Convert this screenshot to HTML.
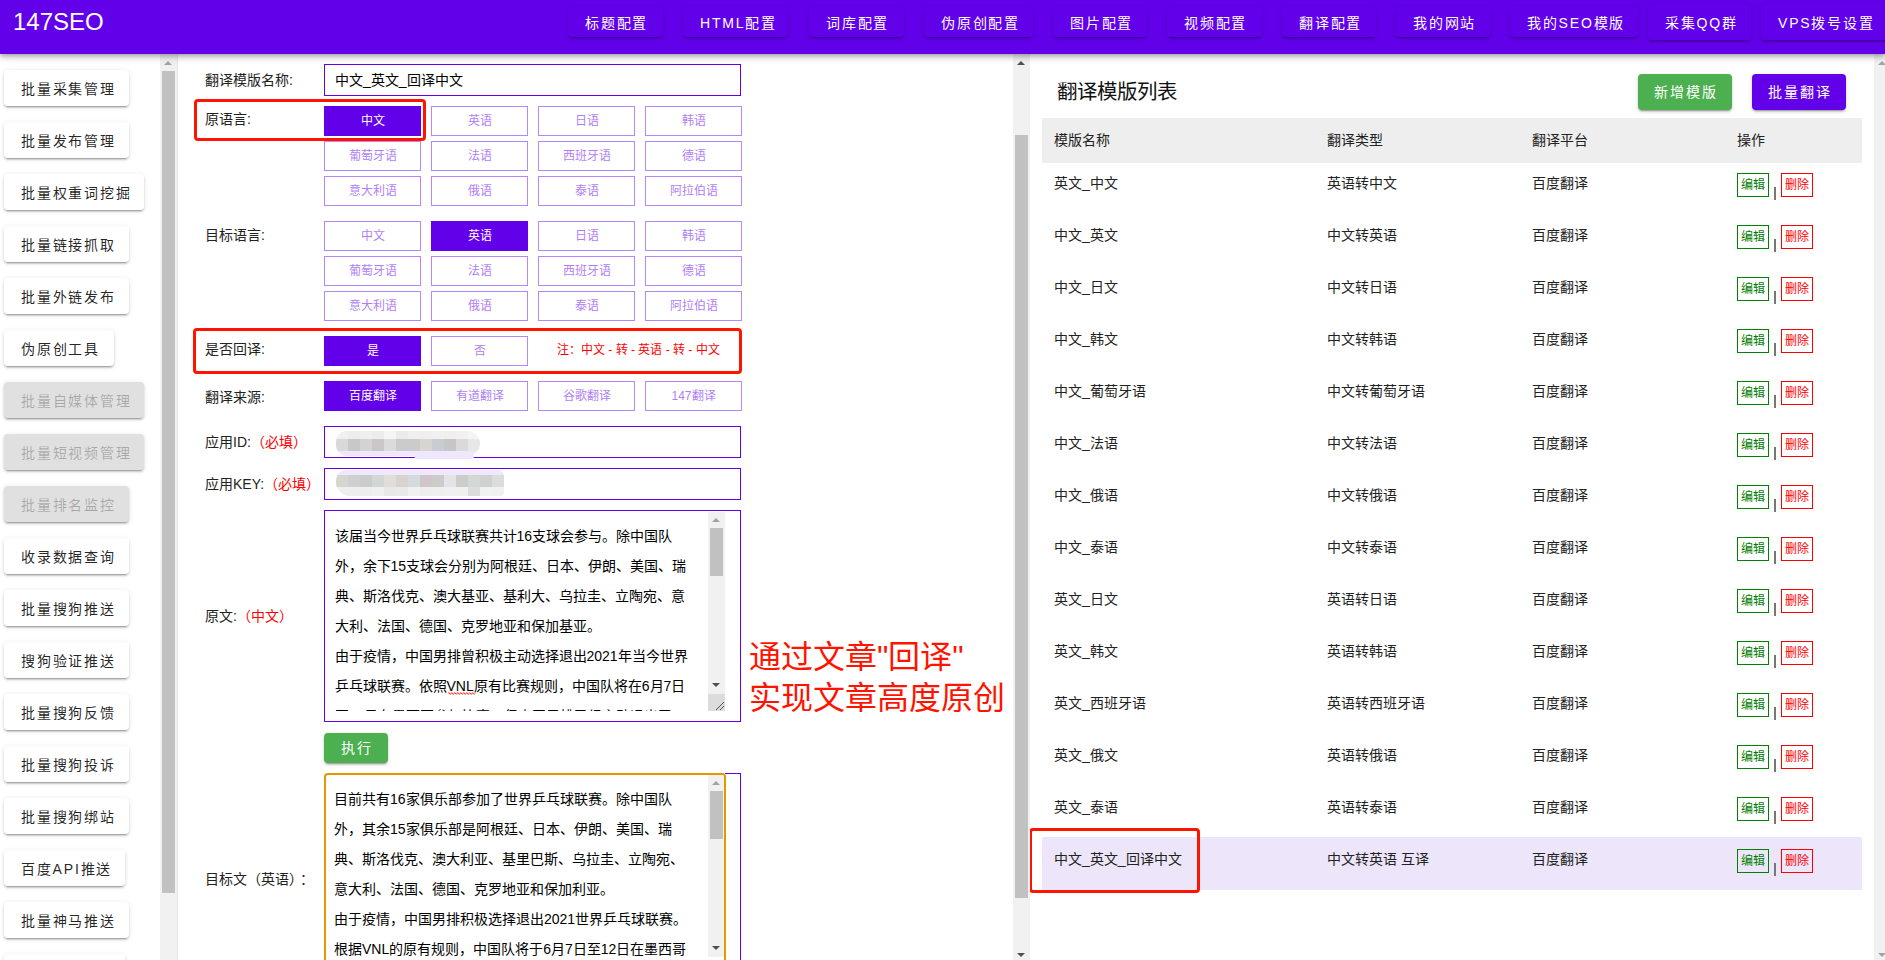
<!DOCTYPE html>
<html lang="zh-CN"><head><meta charset="utf-8">
<style>
*{box-sizing:border-box;margin:0;padding:0}
html,body{width:1885px;height:960px;overflow:hidden;background:#fff}
body{position:relative;font-family:"Liberation Sans",sans-serif;color:rgba(0,0,0,.87);font-size:14px}
.a{position:absolute}
#hdr{left:0;top:0;width:1885px;height:54px;background:#6200ea;z-index:5;box-shadow:0 2px 4px -1px rgba(0,0,0,.2),0 4px 5px 0 rgba(0,0,0,.14),0 1px 10px 0 rgba(0,0,0,.12)}
#logo{left:13px;top:8px;color:#fff;font-size:24px;line-height:28px}
.nb{font-weight:500;height:30px;top:7px;background:#6200ea;color:#fff;border-radius:4px;font-size:14px;letter-spacing:1.8px;line-height:32px;padding-left:17px;white-space:nowrap;box-shadow:0 3px 1px -2px rgba(0,0,0,.2),0 2px 2px 0 rgba(0,0,0,.14),0 1px 5px 0 rgba(0,0,0,.12)}
.nb.t{height:36px;top:4px;line-height:38px}
.sb{font-weight:500;left:4px;height:36px;background:#fff;border-radius:4px;font-size:14px;letter-spacing:1.8px;line-height:38px;padding-left:17px;white-space:nowrap;color:rgba(0,0,0,.87);box-shadow:0 3px 1px -2px rgba(0,0,0,.2),0 2px 2px 0 rgba(0,0,0,.14),0 1px 5px 0 rgba(0,0,0,.12)}
.sb.d{background:#e0e0e0;color:rgba(0,0,0,.26)}
.trk{background:#f1f1f1}
.thm{background:#c1c1c1}
.up{width:0;height:0;border-left:4px solid transparent;border-right:4px solid transparent;border-bottom:4px solid #505050}
.dn{width:0;height:0;border-left:4px solid transparent;border-right:4px solid transparent;border-top:4px solid #505050}

.lb{left:205px;font-size:14px;line-height:20px;white-space:nowrap;color:#222}
.rd{color:#ff0000}
.inp{left:324px;width:417px;height:32px;border:1px solid #6200ea;background:#fff}
.lg{width:97px;height:30px;border:1px solid #b388ff;color:#b07ff4;font-size:12px;line-height:28px;text-align:center;background:#fff;white-space:nowrap}
.lg.s{background:#6200ea;border-color:#6200ea;color:#fff}
.rbox{border:3px solid #ff1400;border-radius:4px}
.ta{left:324px;width:417px;border:1px solid #6200ea;background:#fff}
.tl{position:absolute;left:9.5px;font-size:14px;line-height:30px;white-space:nowrap;color:#000}
.gbtn{font-weight:500;padding-left:1.8px;background:#4caf50;color:#fff;border-radius:4px;font-size:14px;letter-spacing:1.8px;text-align:center;box-shadow:0 3px 1px -2px rgba(0,0,0,.2),0 2px 2px 0 rgba(0,0,0,.14),0 1px 5px 0 rgba(0,0,0,.12)}

.td{font-size:14px;line-height:20px;white-space:nowrap;color:#222;font-weight:350}
.th{font-size:14px;line-height:20px;white-space:nowrap;color:#222;font-weight:350}
.eb{width:32px;height:24px;font-size:12px;line-height:22px;text-align:center;border:1px solid #008000;color:#008000;background:transparent}
.db{width:32px;height:24px;font-size:12px;line-height:22px;text-align:center;border:1px solid #ff0000;color:#ff0000;background:transparent}
.pp{width:2px;height:13px;background:#777}
</style></head><body>
<div id="hdr" class="a">
  <div id="logo" class="a">147SEO</div>
  <div class="a nb" style="left:568px;width:95px">标题配置</div>
  <div class="a nb" style="left:683px;width:105px">HTML配置</div>
  <div class="a nb" style="left:809px;width:95px">词库配置</div>
  <div class="a nb" style="left:924px;width:109px">伪原创配置</div>
  <div class="a nb" style="left:1053px;width:94px">图片配置</div>
  <div class="a nb" style="left:1167px;width:95px">视频配置</div>
  <div class="a nb" style="left:1282px;width:94px">翻译配置</div>
  <div class="a nb" style="left:1396px;width:94px">我的网站</div>
  <div class="a nb" style="left:1510px;width:128px">我的SEO模版</div>
  <div class="a nb t" style="left:1648px;width:103px">采集QQ群</div>
  <div class="a nb t" style="left:1761px;width:135px">VPS拨号设置</div>
</div>

<!-- sidebar -->
<div class="a sb" style="top:70px;width:125px">批量采集管理</div>
<div class="a sb" style="top:122px;width:125px">批量发布管理</div>
<div class="a sb" style="top:174px;width:140px">批量权重词挖掘</div>
<div class="a sb" style="top:226px;width:125px">批量链接抓取</div>
<div class="a sb" style="top:278px;width:125px">批量外链发布</div>
<div class="a sb" style="top:330px;width:110px">伪原创工具</div>
<div class="a sb d" style="top:382px;width:140px">批量自媒体管理</div>
<div class="a sb d" style="top:434px;width:140px">批量短视频管理</div>
<div class="a sb d" style="top:486px;width:125px">批量排名监控</div>
<div class="a sb" style="top:538px;width:125px">收录数据查询</div>
<div class="a sb" style="top:590px;width:125px">批量搜狗推送</div>
<div class="a sb" style="top:642px;width:125px">搜狗验证推送</div>
<div class="a sb" style="top:694px;width:125px">批量搜狗反馈</div>
<div class="a sb" style="top:746px;width:125px">批量搜狗投诉</div>
<div class="a sb" style="top:798px;width:125px">批量搜狗绑站</div>
<div class="a sb" style="top:850px;width:121px">百度API推送</div>
<div class="a sb" style="top:902px;width:125px">批量神马推送</div>
<div class="a sb" style="top:954px;width:121px">百度API推送</div>

<!-- form -->
<div class="a lb" style="top:70px">翻译模版名称:</div>
<div class="a inp" style="top:64px"><div class="a" style="left:10px;top:5px;line-height:20px;color:#000">中文_英文_回译中文</div></div>
<div class="a lb" style="top:109px">原语言:</div>
<div class="a lg s" style="left:324px;top:106px">中文</div>
<div class="a lg" style="left:431px;top:106px">英语</div>
<div class="a lg" style="left:538px;top:106px">日语</div>
<div class="a lg" style="left:645px;top:106px">韩语</div>
<div class="a lg" style="left:324px;top:141px">葡萄牙语</div>
<div class="a lg" style="left:431px;top:141px">法语</div>
<div class="a lg" style="left:538px;top:141px">西班牙语</div>
<div class="a lg" style="left:645px;top:141px">德语</div>
<div class="a lg" style="left:324px;top:176px">意大利语</div>
<div class="a lg" style="left:431px;top:176px">俄语</div>
<div class="a lg" style="left:538px;top:176px">泰语</div>
<div class="a lg" style="left:645px;top:176px">阿拉伯语</div>
<div class="a rbox" style="left:194px;top:99px;width:232px;height:42px"></div>
<div class="a lb" style="top:225px">目标语言:</div>
<div class="a lg" style="left:324px;top:221px">中文</div>
<div class="a lg s" style="left:431px;top:221px">英语</div>
<div class="a lg" style="left:538px;top:221px">日语</div>
<div class="a lg" style="left:645px;top:221px">韩语</div>
<div class="a lg" style="left:324px;top:256px">葡萄牙语</div>
<div class="a lg" style="left:431px;top:256px">法语</div>
<div class="a lg" style="left:538px;top:256px">西班牙语</div>
<div class="a lg" style="left:645px;top:256px">德语</div>
<div class="a lg" style="left:324px;top:291px">意大利语</div>
<div class="a lg" style="left:431px;top:291px">俄语</div>
<div class="a lg" style="left:538px;top:291px">泰语</div>
<div class="a lg" style="left:645px;top:291px">阿拉伯语</div>
<div class="a lb" style="top:339px">是否回译:</div>
<div class="a lg s" style="left:324px;top:336px">是</div>
<div class="a lg" style="left:431px;top:336px">否</div>
<div class="a rd" style="left:557px;top:340px;font-size:12px;line-height:20px;white-space:nowrap">注：中文 - 转 - 英语 - 转 - 中文</div>
<div class="a rbox" style="left:193px;top:328px;width:549px;height:46px"></div>
<div class="a lb" style="top:387px">翻译来源:</div>
<div class="a lg s" style="left:324px;top:381px">百度翻译</div>
<div class="a lg" style="left:431px;top:381px">有道翻译</div>
<div class="a lg" style="left:538px;top:381px">谷歌翻译</div>
<div class="a lg" style="left:645px;top:381px">147翻译</div>
<div class="a lb" style="top:432px">应用ID:<span class="rd">（必填）</span></div>
<div class="a inp" style="top:426px"></div>
<div class="a" style="left:336px;top:431px;width:144px;height:25px;overflow:hidden;border-radius:12px 14px 14px 12px"><div class="a" style="left:0px;top:0px;width:12px;height:8px;background:#f0f0f0"></div><div class="a" style="left:12px;top:0px;width:12px;height:8px;background:#ededed"></div><div class="a" style="left:24px;top:0px;width:12px;height:8px;background:#eeefef"></div><div class="a" style="left:36px;top:0px;width:12px;height:8px;background:#ececec"></div><div class="a" style="left:48px;top:0px;width:12px;height:8px;background:#f5f5f5"></div><div class="a" style="left:60px;top:0px;width:12px;height:8px;background:#ebebeb"></div><div class="a" style="left:72px;top:0px;width:12px;height:8px;background:#eff0ef"></div><div class="a" style="left:84px;top:0px;width:12px;height:8px;background:#f0eeee"></div><div class="a" style="left:96px;top:0px;width:12px;height:8px;background:#f1f1f1"></div><div class="a" style="left:108px;top:0px;width:12px;height:8px;background:#eeefee"></div><div class="a" style="left:120px;top:0px;width:12px;height:8px;background:#f2f0f0"></div><div class="a" style="left:132px;top:0px;width:12px;height:8px;background:#f4f4f4"></div><div class="a" style="left:0px;top:8px;width:12px;height:12px;background:#d9d9d9"></div><div class="a" style="left:12px;top:8px;width:12px;height:12px;background:#c8c8c8"></div><div class="a" style="left:24px;top:8px;width:12px;height:12px;background:#d3d3d3"></div><div class="a" style="left:36px;top:8px;width:12px;height:12px;background:#cbc7c7"></div><div class="a" style="left:48px;top:8px;width:12px;height:12px;background:#dcdadb"></div><div class="a" style="left:60px;top:8px;width:12px;height:12px;background:#cbcbcc"></div><div class="a" style="left:72px;top:8px;width:12px;height:12px;background:#cbcbcc"></div><div class="a" style="left:84px;top:8px;width:12px;height:12px;background:#d8d4d2"></div><div class="a" style="left:96px;top:8px;width:12px;height:12px;background:#c9cdd2"></div><div class="a" style="left:108px;top:8px;width:12px;height:12px;background:#c8c6c4"></div><div class="a" style="left:120px;top:8px;width:12px;height:12px;background:#dadada"></div><div class="a" style="left:132px;top:8px;width:12px;height:12px;background:#e6e7e8"></div><div class="a" style="left:0px;top:20px;width:12px;height:5px;background:#efe7fb"></div><div class="a" style="left:12px;top:20px;width:12px;height:5px;background:#efe7fb"></div><div class="a" style="left:24px;top:20px;width:12px;height:5px;background:#efe7fb"></div><div class="a" style="left:36px;top:20px;width:12px;height:5px;background:#efe7fb"></div><div class="a" style="left:48px;top:20px;width:12px;height:5px;background:#efe7fb"></div><div class="a" style="left:60px;top:20px;width:12px;height:5px;background:#efe7fb"></div><div class="a" style="left:72px;top:20px;width:12px;height:5px;background:#efe7fb"></div><div class="a" style="left:84px;top:20px;width:12px;height:5px;background:#efe7fb"></div><div class="a" style="left:96px;top:20px;width:12px;height:5px;background:#efe7fb"></div><div class="a" style="left:108px;top:20px;width:12px;height:5px;background:#efe7fb"></div><div class="a" style="left:120px;top:20px;width:12px;height:5px;background:#efe7fb"></div><div class="a" style="left:132px;top:20px;width:12px;height:5px;background:#efe7fb"></div></div>
<div class="a lb" style="top:474px">应用KEY:<span class="rd">（必填）</span></div>
<div class="a" style="left:414px;top:455px;width:60px;height:4px;background:#efe7fb;border-radius:0 0 8px 12px"></div>
<div class="a inp" style="top:468px"></div>
<div class="a" style="left:336px;top:470px;width:168px;height:26px;overflow:hidden;border-radius:10px 6px 4px 14px"><div class="a" style="left:0px;top:0px;width:12px;height:5px;background:#efe7fb"></div><div class="a" style="left:12px;top:0px;width:12px;height:5px;background:#efe7fb"></div><div class="a" style="left:24px;top:0px;width:12px;height:5px;background:#efe7fb"></div><div class="a" style="left:36px;top:0px;width:12px;height:5px;background:#efe7fb"></div><div class="a" style="left:48px;top:0px;width:12px;height:5px;background:#efe7fb"></div><div class="a" style="left:60px;top:0px;width:12px;height:5px;background:#efe7fb"></div><div class="a" style="left:72px;top:0px;width:12px;height:5px;background:#efe7fb"></div><div class="a" style="left:84px;top:0px;width:12px;height:5px;background:#efe7fb"></div><div class="a" style="left:96px;top:0px;width:12px;height:5px;background:#efe7fb"></div><div class="a" style="left:108px;top:0px;width:12px;height:5px;background:#efe7fb"></div><div class="a" style="left:120px;top:0px;width:12px;height:5px;background:#efe7fb"></div><div class="a" style="left:132px;top:0px;width:12px;height:5px;background:#efe7fb"></div><div class="a" style="left:144px;top:0px;width:12px;height:5px;background:#efe7fb"></div><div class="a" style="left:156px;top:0px;width:12px;height:5px;background:#efe7fb"></div><div class="a" style="left:0px;top:5px;width:12px;height:12px;background:#d8d4cf"></div><div class="a" style="left:12px;top:5px;width:12px;height:12px;background:#ccd0d3"></div><div class="a" style="left:24px;top:5px;width:12px;height:12px;background:#cbcbcb"></div><div class="a" style="left:36px;top:5px;width:12px;height:12px;background:#d2d6d7"></div><div class="a" style="left:48px;top:5px;width:12px;height:12px;background:#e0dddc"></div><div class="a" style="left:60px;top:5px;width:12px;height:12px;background:#d8d3cf"></div><div class="a" style="left:72px;top:5px;width:12px;height:12px;background:#d5dbdc"></div><div class="a" style="left:84px;top:5px;width:12px;height:12px;background:#cfc5ca"></div><div class="a" style="left:96px;top:5px;width:12px;height:12px;background:#cdcbc7"></div><div class="a" style="left:108px;top:5px;width:12px;height:12px;background:#e4e3e8"></div><div class="a" style="left:120px;top:5px;width:12px;height:12px;background:#cbcdcb"></div><div class="a" style="left:132px;top:5px;width:12px;height:12px;background:#d2d8d2"></div><div class="a" style="left:144px;top:5px;width:12px;height:12px;background:#d2cfd0"></div><div class="a" style="left:156px;top:5px;width:12px;height:12px;background:#dadcdd"></div><div class="a" style="left:0px;top:17px;width:12px;height:9px;background:#efefef"></div><div class="a" style="left:12px;top:17px;width:12px;height:9px;background:#eeeeee"></div><div class="a" style="left:24px;top:17px;width:12px;height:9px;background:#eeeeee"></div><div class="a" style="left:36px;top:17px;width:12px;height:9px;background:#f0f0f0"></div><div class="a" style="left:48px;top:17px;width:12px;height:9px;background:#e8e8e8"></div><div class="a" style="left:60px;top:17px;width:12px;height:9px;background:#e9e9e9"></div><div class="a" style="left:72px;top:17px;width:12px;height:9px;background:#f0f1f0"></div><div class="a" style="left:84px;top:17px;width:12px;height:9px;background:#efeeee"></div><div class="a" style="left:96px;top:17px;width:12px;height:9px;background:#efefef"></div><div class="a" style="left:108px;top:17px;width:12px;height:9px;background:#f0f0f0"></div><div class="a" style="left:120px;top:17px;width:12px;height:9px;background:#f0f0f0"></div><div class="a" style="left:132px;top:17px;width:12px;height:9px;background:#dcdcdc"></div><div class="a" style="left:144px;top:17px;width:12px;height:9px;background:#f0f1f1"></div><div class="a" style="left:156px;top:17px;width:12px;height:9px;background:#f0f0f0"></div></div>
<div class="a lb" style="top:606px">原文:<span class="rd">（中文）</span></div>
<div class="a ta" style="top:510px;height:212px"><div class="a" style="left:0;top:0;width:384px;height:200px;overflow:hidden"><div class="tl" style="top:10px">该届当今世界乒乓球联赛共计16支球会参与。除中国队</div><div class="tl" style="top:40px">外，余下15支球会分别为阿根廷、日本、伊朗、美国、瑞</div><div class="tl" style="top:70px">典、斯洛伐克、澳大基亚、基利大、乌拉圭、立陶宛、意</div><div class="tl" style="top:100px">大利、法国、德国、克罗地亚和保加基亚。</div><div class="tl" style="top:130px">由于疫情，中国男排曾积极主动选择退出2021年当今世界</div><div class="tl" style="top:160px">乒乓球联赛。依照VNL原有比赛规则，中国队将在6月7日</div><div class="tl" style="top:190px">至12日在墨西哥参加比赛，但中国男排已经主动退出了。</div></div><svg class="a" style="left:123px;top:180px" width="28" height="4"><path d="M0 2.5 Q0.75 0.8 1.50 2.5 Q2.25 4.2 3.00 2.5 Q3.75 0.8 4.50 2.5 Q5.25 4.2 6.00 2.5 Q6.75 0.8 7.50 2.5 Q8.25 4.2 9.00 2.5 Q9.75 0.8 10.50 2.5 Q11.25 4.2 12.00 2.5 Q12.75 0.8 13.50 2.5 Q14.25 4.2 15.00 2.5 Q15.75 0.8 16.50 2.5 Q17.25 4.2 18.00 2.5 Q18.75 0.8 19.50 2.5 Q20.25 4.2 21.00 2.5 Q21.75 0.8 22.50 2.5 Q23.25 4.2 24.00 2.5 Q24.75 0.8 25.50 2.5 Q26.25 4.2 27.00 2.5" stroke="#f00" stroke-width="1" fill="none"/></svg><div class="a trk" style="left:383px;top:1px;width:17px;height:182px"></div><div class="a up" style="left:387px;top:7px;border-bottom-color:#a3a3a3"></div><div class="a thm" style="left:385px;top:17px;width:13px;height:48px"></div><div class="a dn" style="left:387px;top:172px"></div><svg class="a" style="left:383px;top:183px" width="17" height="17"><rect width="17" height="17" fill="#dcdcdc"/><line x1="8" y1="16" x2="16" y2="8" stroke="#404040" stroke-width="0.9"/><line x1="12" y1="16" x2="16" y2="12" stroke="#404040" stroke-width="0.9"/></svg></div>
<div class="a gbtn" style="left:324px;top:733px;width:64px;height:30px;line-height:31px">执行</div>
<div class="a lb" style="top:869px">目标文（英语）<span style="margin-left:4px">：</span></div>
<div class="a" style="left:725px;top:773px;width:16px;height:1px;background:#6200ea"></div><div class="a" style="left:740px;top:773px;width:1px;height:187px;background:#6200ea"></div><div class="a" style="left:324px;top:773px;width:402px;height:204px;border:2px solid #e59700;border-radius:4px;background:#fff;overflow:hidden"><div class="tl" style="top:9px;left:8px">目前共有16家俱乐部参加了世界乒乓球联赛。除中国队</div><div class="tl" style="top:39px;left:8px">外，其余15家俱乐部是阿根廷、日本、伊朗、美国、瑞</div><div class="tl" style="top:69px;left:8px">典、斯洛伐克、澳大利亚、基里巴斯、乌拉圭、立陶宛、</div><div class="tl" style="top:99px;left:8px">意大利、法国、德国、克罗地亚和保加利亚。</div><div class="tl" style="top:129px;left:8px">由于疫情，中国男排积极选择退出2021世界乒乓球联赛。</div><div class="tl" style="top:159px;left:8px">根据VNL的原有规则，中国队将于6月7日至12日在墨西哥</div><div class="a trk" style="left:382px;top:0;width:17px;height:182px"></div><div class="a up" style="left:386px;top:6px;border-bottom-color:#a3a3a3"></div><div class="a thm" style="left:384px;top:16px;width:13px;height:48px"></div><div class="a dn" style="left:386px;top:171px"></div></div>
<div class="a rd" style="left:749px;top:637px;font-size:32px;line-height:41px;white-space:nowrap;color:#ff1400">通过文章"回译"<br>实现文章高度原创</div>

<!-- right panel -->
<div class="a" style="left:1057px;top:80px;font-size:20.5px;line-height:24px;white-space:nowrap;color:#111">翻译模版列表</div>
<div class="a gbtn" style="left:1638px;top:74px;width:94px;height:36px;line-height:36px">新增模版</div>
<div class="a gbtn" style="left:1752px;top:74px;width:94px;height:36px;line-height:36px;background:#6200ea">批量翻译</div>
<div class="a" style="left:1042px;top:118px;width:820px;height:45px;background:#eeeeee"></div>
<div class="a th" style="left:1054px;top:130px">模版名称</div>
<div class="a th" style="left:1327px;top:130px">翻译类型</div>
<div class="a th" style="left:1532px;top:130px">翻译平台</div>
<div class="a th" style="left:1737px;top:130px">操作</div>
<div class="a" style="left:1042px;top:837px;width:820px;height:53px;background:#ede6fa"></div>
<div class="a td" style="left:1054px;top:173px">英文_中文</div>
<div class="a td" style="left:1327px;top:173px">英语转中文</div>
<div class="a td" style="left:1532px;top:173px">百度翻译</div>
<div class="a eb" style="left:1737px;top:173px">编辑</div>
<div class="a pp" style="left:1774px;top:187px"></div>
<div class="a db" style="left:1781px;top:173px">删除</div>
<div class="a td" style="left:1054px;top:225px">中文_英文</div>
<div class="a td" style="left:1327px;top:225px">中文转英语</div>
<div class="a td" style="left:1532px;top:225px">百度翻译</div>
<div class="a eb" style="left:1737px;top:225px">编辑</div>
<div class="a pp" style="left:1774px;top:239px"></div>
<div class="a db" style="left:1781px;top:225px">删除</div>
<div class="a td" style="left:1054px;top:277px">中文_日文</div>
<div class="a td" style="left:1327px;top:277px">中文转日语</div>
<div class="a td" style="left:1532px;top:277px">百度翻译</div>
<div class="a eb" style="left:1737px;top:277px">编辑</div>
<div class="a pp" style="left:1774px;top:291px"></div>
<div class="a db" style="left:1781px;top:277px">删除</div>
<div class="a td" style="left:1054px;top:329px">中文_韩文</div>
<div class="a td" style="left:1327px;top:329px">中文转韩语</div>
<div class="a td" style="left:1532px;top:329px">百度翻译</div>
<div class="a eb" style="left:1737px;top:329px">编辑</div>
<div class="a pp" style="left:1774px;top:343px"></div>
<div class="a db" style="left:1781px;top:329px">删除</div>
<div class="a td" style="left:1054px;top:381px">中文_葡萄牙语</div>
<div class="a td" style="left:1327px;top:381px">中文转葡萄牙语</div>
<div class="a td" style="left:1532px;top:381px">百度翻译</div>
<div class="a eb" style="left:1737px;top:381px">编辑</div>
<div class="a pp" style="left:1774px;top:395px"></div>
<div class="a db" style="left:1781px;top:381px">删除</div>
<div class="a td" style="left:1054px;top:433px">中文_法语</div>
<div class="a td" style="left:1327px;top:433px">中文转法语</div>
<div class="a td" style="left:1532px;top:433px">百度翻译</div>
<div class="a eb" style="left:1737px;top:433px">编辑</div>
<div class="a pp" style="left:1774px;top:447px"></div>
<div class="a db" style="left:1781px;top:433px">删除</div>
<div class="a td" style="left:1054px;top:485px">中文_俄语</div>
<div class="a td" style="left:1327px;top:485px">中文转俄语</div>
<div class="a td" style="left:1532px;top:485px">百度翻译</div>
<div class="a eb" style="left:1737px;top:485px">编辑</div>
<div class="a pp" style="left:1774px;top:499px"></div>
<div class="a db" style="left:1781px;top:485px">删除</div>
<div class="a td" style="left:1054px;top:537px">中文_泰语</div>
<div class="a td" style="left:1327px;top:537px">中文转泰语</div>
<div class="a td" style="left:1532px;top:537px">百度翻译</div>
<div class="a eb" style="left:1737px;top:537px">编辑</div>
<div class="a pp" style="left:1774px;top:551px"></div>
<div class="a db" style="left:1781px;top:537px">删除</div>
<div class="a td" style="left:1054px;top:589px">英文_日文</div>
<div class="a td" style="left:1327px;top:589px">英语转日语</div>
<div class="a td" style="left:1532px;top:589px">百度翻译</div>
<div class="a eb" style="left:1737px;top:589px">编辑</div>
<div class="a pp" style="left:1774px;top:603px"></div>
<div class="a db" style="left:1781px;top:589px">删除</div>
<div class="a td" style="left:1054px;top:641px">英文_韩文</div>
<div class="a td" style="left:1327px;top:641px">英语转韩语</div>
<div class="a td" style="left:1532px;top:641px">百度翻译</div>
<div class="a eb" style="left:1737px;top:641px">编辑</div>
<div class="a pp" style="left:1774px;top:655px"></div>
<div class="a db" style="left:1781px;top:641px">删除</div>
<div class="a td" style="left:1054px;top:693px">英文_西班牙语</div>
<div class="a td" style="left:1327px;top:693px">英语转西班牙语</div>
<div class="a td" style="left:1532px;top:693px">百度翻译</div>
<div class="a eb" style="left:1737px;top:693px">编辑</div>
<div class="a pp" style="left:1774px;top:707px"></div>
<div class="a db" style="left:1781px;top:693px">删除</div>
<div class="a td" style="left:1054px;top:745px">英文_俄文</div>
<div class="a td" style="left:1327px;top:745px">英语转俄语</div>
<div class="a td" style="left:1532px;top:745px">百度翻译</div>
<div class="a eb" style="left:1737px;top:745px">编辑</div>
<div class="a pp" style="left:1774px;top:759px"></div>
<div class="a db" style="left:1781px;top:745px">删除</div>
<div class="a td" style="left:1054px;top:797px">英文_泰语</div>
<div class="a td" style="left:1327px;top:797px">英语转泰语</div>
<div class="a td" style="left:1532px;top:797px">百度翻译</div>
<div class="a eb" style="left:1737px;top:797px">编辑</div>
<div class="a pp" style="left:1774px;top:811px"></div>
<div class="a db" style="left:1781px;top:797px">删除</div>
<div class="a td" style="left:1054px;top:849px">中文_英文_回译中文</div>
<div class="a td" style="left:1327px;top:849px">中文转英语 互译</div>
<div class="a td" style="left:1532px;top:849px">百度翻译</div>
<div class="a eb" style="left:1737px;top:849px">编辑</div>
<div class="a pp" style="left:1774px;top:863px"></div>
<div class="a db" style="left:1781px;top:849px">删除</div>
<div class="a rbox" style="left:1029px;top:828px;width:171px;height:65px"></div>

<!-- left scrollbar -->
<div class="a trk" style="left:160px;top:54px;width:17px;height:906px"></div>
<div class="a" style="left:177px;top:54px;width:1px;height:906px;background:#e6e6e6"></div>
<div class="a up" style="left:164px;top:61px;border-bottom-color:#a3a3a3"></div>
<div class="a thm" style="left:162px;top:71px;width:13px;height:822px"></div>

<!-- middle scrollbar -->
<div class="a trk" style="left:1013px;top:54px;width:17px;height:906px"></div>
<div class="a up" style="left:1017px;top:61px"></div>
<div class="a thm" style="left:1015px;top:135px;width:13px;height:763px"></div>
<div class="a dn" style="left:1017px;top:953px"></div>

<!-- right scrollbar -->
<div class="a trk" style="left:1874px;top:54px;width:17px;height:906px"></div>
<div class="a up" style="left:1878px;top:61px;border-bottom-color:#a3a3a3"></div>
<div class="a dn" style="left:1878px;top:953px;border-top-color:#a3a3a3"></div>

</body></html>
